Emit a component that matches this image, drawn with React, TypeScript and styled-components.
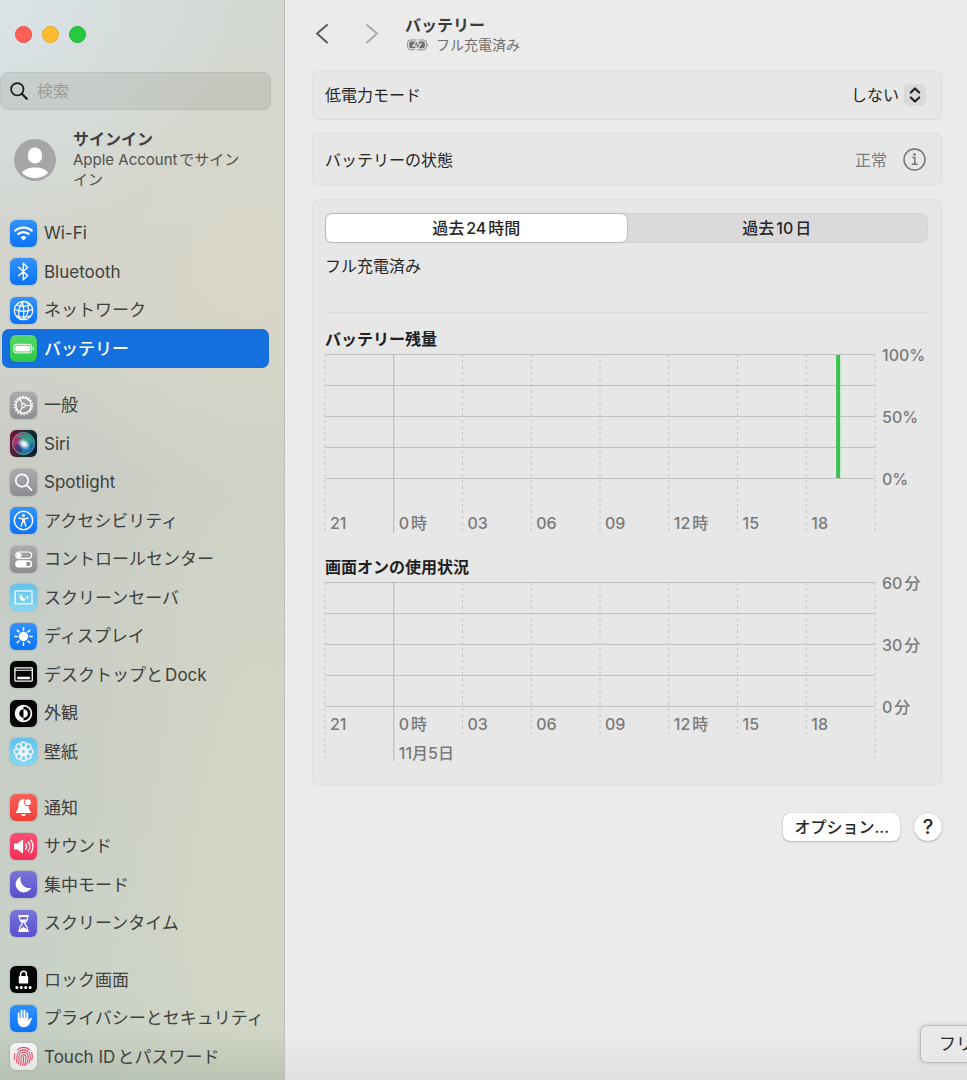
import React, { useState } from "react";
import styled, { createGlobalStyle } from "styled-components";

const GlobalStyle = createGlobalStyle`
  *, *::before, *::after { box-sizing: border-box; }
  html { background: #ebebeb; }
  body {
    margin: 0;
    font-family: Inter, "Noto Sans CJK JP", sans-serif;
    font-size: 16px;
    line-height: 20px;
    color: #262626;
    text-autospace: normal;
  }
  button, input, select { font: inherit; color: inherit; }
  svg { display: block; flex: none; }
`;

const Window = styled.div`
  display: flex;
  min-height: 100vh;
  position: relative;
  overflow: hidden;
`;

/* ---------- Sidebar ---------- */

const Sidebar = styled.aside`
  flex: none;
  width: 285px;
  display: flex;
  flex-direction: column;
  padding: 26px 0 4px;
  border-right: 1px solid #bfc0bc;
  color: #3e403d;
  background:
    linear-gradient(to top, rgba(150, 165, 150, 0.35), transparent 50px),
    radial-gradient(circle at 0 0, #dae3e7, transparent 240px),
    radial-gradient(circle at 250px 260px, #d8d6c8, transparent 240px),
    radial-gradient(ellipse at 260px 840px, #d4d7c5, transparent 220px),
    linear-gradient(#d4d8d3, #d2d3cb 30%, #c9ccc6 45%, #c8cdc6 70%, #c8d1c8 90%, #c6cfc2);
`;

const TrafficLights = styled.div`
  display: flex;
  gap: 10px;
  padding-left: 15px;
`;

const Light = styled.button<{ $color: string; $edge: string }>`
  width: 17px;
  height: 17px;
  padding: 0;
  border-radius: 50%;
  border: 1px solid ${(p) => p.$edge};
  background: ${(p) => p.$color};
`;

const SearchBox = styled.label`
  display: flex;
  align-items: center;
  gap: 9px;
  height: 38px;
  margin: 29px 13px 0 0;
  padding-left: 9px;
  border-radius: 8px;
  border: 1px solid rgba(0, 0, 0, 0.05);
  background: rgba(100, 105, 95, 0.14);
`;

const SearchInput = styled.input`
  flex: 1;
  min-width: 0;
  border: 0;
  padding: 0;
  background: none;
  outline: none;
  &::placeholder { color: #9a9d98; opacity: 1; }
`;

const Account = styled.a`
  display: flex;
  align-items: center;
  gap: 17px;
  margin: 19px 0 24px;
  padding-left: 14px;
  color: inherit;
  text-decoration: none;
`;

const AccountName = styled.div`
  font-weight: 600;
  line-height: 21px;
`;

const AccountNote = styled.div`
  font-size: 15px;
  line-height: 20px;
  color: #50524e;
`;

const Nav = styled.nav`
  flex: 1;
  display: flex;
  flex-direction: column;
  gap: 18px;
  padding: 0 15px 0 2px;
`;

const NavGroup = styled.ul<{ $count: number }>`
  flex: ${(p) => p.$count} 0 auto;
  max-height: ${(p) => p.$count * 39}px;
  display: flex;
  flex-direction: column;
  margin: 0;
  padding: 0;
  list-style: none;
`;

const NavItem = styled.li`
  flex: 1 0 38px;
  display: flex;
`;

const NavLink = styled.a<{ $active?: boolean }>`
  flex: 1;
  display: flex;
  align-items: center;
  gap: 7px;
  padding-left: 8px;
  border-radius: 7px;
  font-size: 17px;
  white-space: nowrap;
  text-decoration: none;
  color: ${(p) => (p.$active ? "#fff" : "inherit")};
  font-weight: ${(p) => (p.$active ? 500 : 400)};
  background: ${(p) => (p.$active ? "#1370de" : "none")};
`;

const Tile = styled.span<{ $bg: string }>`
  display: block;
  width: 27px;
  height: 27px;
  border-radius: 6px;
  overflow: hidden;
  background: ${(p) => p.$bg};
  box-shadow: 0 0 2px rgba(0, 0, 0, 0.25);
`;

/* ---------- Content ---------- */

const Content = styled.main`
  flex: 1;
  min-width: 0;
  display: flex;
  flex-direction: column;
  padding: 15px 25px 24px 27px;
  background: linear-gradient(to top, #e0e0e0, #ebebeb 50px);
`;

const Header = styled.header`
  display: flex;
  align-items: center;
  margin-bottom: 15px;
`;

const NavButton = styled.button<{ $dim?: boolean }>`
  width: 20px;
  height: 24px;
  margin-right: 30px;
  padding: 0;
  border: 0;
  background: none;
  color: ${(p) => (p.$dim ? "#ababab" : "#5a5a5a")};
`;

const Heading = styled.div`
  margin-left: -7px;
`;

const Title = styled.h1`
  margin: 0;
  font-size: 16px;
  font-weight: 600;
  line-height: 20px;
  color: #3a3a3a;
`;

const Status = styled.div`
  display: flex;
  align-items: center;
  gap: 7px;
  padding-left: 2px;
  font-size: 14px;
  line-height: 20px;
  color: #6f6f6f;
`;

const Cards = styled.div`
  display: flex;
  flex-direction: column;
  gap: 13px;
`;

const Card = styled.section`
  padding: 13px 13px 24px 12px;
  border: 1px solid #dedede;
  border-radius: 7px;
  background: #e7e7e7;
`;

const SettingRow = styled(Card)<{ $height: number }>`
  display: flex;
  align-items: center;
  justify-content: space-between;
  min-height: ${(p) => p.$height}px;
  padding: 0 15px 0 12px;
`;

const SelectBox = styled.span`
  position: relative;
  display: flex;
  align-items: center;
`;

const Select = styled.select`
  appearance: none;
  border: 0;
  outline: none;
  padding: 0 27px 0 0;
  background: none;
  text-align-last: right;
  line-height: 24px;
`;

const Stepper = styled.span`
  position: absolute;
  right: 0;
  width: 22px;
  height: 22px;
  border-radius: 5px;
  background: #dadada;
  pointer-events: none;
`;

const StateValue = styled.span`
  display: flex;
  align-items: center;
  gap: 16px;
  color: #7b7b7b;
`;

const IconButton = styled.button`
  padding: 0;
  border: 0;
  background: none;
  color: #757575;
`;

const Segments = styled.div`
  display: flex;
  height: 30px;
  border-radius: 7px;
  border: 1px solid #d2d2d2;
  background: #dadada;
`;

const Segment = styled.button<{ $on: boolean }>`
  flex: 1;
  padding: 0;
  border: 0;
  border-radius: 6px;
  font-weight: 500;
  background: ${(p) => (p.$on ? "#fff" : "none")};
  box-shadow: ${(p) => (p.$on ? "0 0 2px rgba(0, 0, 0, 0.4)" : "none")};
`;

const Charge = styled.p`
  margin: 11px 0 0;
  padding-bottom: 34px;
  line-height: 24px;
  border-bottom: 1px solid #dadada;
`;

const ChartTitle = styled.h2<{ $gap: number }>`
  margin: ${(p) => p.$gap}px 0 3px;
  font-size: 16px;
  font-weight: 700;
  line-height: 24px;
  color: #202020;
`;

const ChartArea = styled.div`
  display: grid;
  grid-template-columns: minmax(0, 1fr) 53px;
`;

const Plot = styled.svg`
  width: 100%;
  height: 179px;
  overflow: visible;
  text { font-size: 16px; font-weight: 500; fill: #7a7a7a; }
`;

const DateText = styled.text`
  text-autospace: no-autospace;
`;

const Scale = styled.div`
  display: flex;
  flex-direction: column;
  justify-content: space-between;
  height: 148px;
  margin-top: -11px;
  padding-left: 7px;
  font-weight: 500;
  line-height: 24px;
  color: #7a7a7a;
  white-space: nowrap;
`;

const Footer = styled.footer`
  display: flex;
  justify-content: flex-end;
  align-items: center;
  gap: 14px;
  margin-top: 27px;
`;

const PushButton = styled.button`
  height: 28px;
  padding: 0 11px;
  border: 0;
  border-radius: 7px;
  font-weight: 500;
  background: #fff;
  box-shadow: 0 0 1px rgba(0, 0, 0, 0.3), 0 1px 2px rgba(0, 0, 0, 0.2);
`;

const HelpButton = styled(PushButton)`
  width: 28px;
  padding: 0;
  border-radius: 50%;
  font-size: 20px;
  line-height: 28px;
`;

const DockLabel = styled.div`
  position: absolute;
  right: -7px;
  bottom: 17px;
  padding: 0 0 0 18px;
  width: 54px;
  height: 38px;
  overflow: hidden;
  border: 1px solid #bdbdbd;
  border-radius: 7px 0 0 7px;
  line-height: 36px;
  font-size: 17px;
  white-space: nowrap;
  background: #e8e8e8;
  box-shadow: 0 0 4px rgba(0, 0, 0, 0.18);
`;

/* ---------- Icons ---------- */

const BLUE = "linear-gradient(#3391fb, #0a74f5)";
const GRAY = "linear-gradient(#ababaf, #8c8c91)";
const SKY = "linear-gradient(#62c4ec, #8ad6f2)";
const BLACK = "#060606";
const PURPLE = "linear-gradient(#7a74dc, #5850cc)";

const petals = Array.from({ length: 8 }, (_, i) => i * 45);

const glyphs: Record<string, React.ReactNode> = {
  wifi: (
    <g fill="none" stroke="#fff" strokeWidth="2.3">
      <path d="M4.6 11.2a12.7 12.7 0 0 1 17.8 0" />
      <path d="M7.7 14.4a8.3 8.3 0 0 1 11.6 0" />
      <path d="M13.5 20.4l-3-3a4.3 4.3 0 0 1 6 0z" fill="#fff" stroke="none" />
    </g>
  ),
  bluetooth: (
    <path d="M8.6 9.2l9 8.4-4.3 4.2V5.2l4.3 4.2-9 8.4" fill="none" stroke="#fff" strokeWidth="1.4" strokeLinejoin="round" strokeLinecap="round" />
  ),
  network: (
    <g fill="none" stroke="#fff" strokeWidth="1.2">
      <circle cx="13.5" cy="13.5" r="9.2" />
      <ellipse cx="13.5" cy="13.5" rx="4.6" ry="9.2" transform="rotate(12 13.5 13.5)" />
      <path d="M12 4.500c2 6 2.500 12 1 18M4.500 12.500c6 2.500 12 2.500 18 0M6.500 7.800c4.500 2 9.500 2 14 0M6 18.800c5 1.600 10 1.600 15 0" />
    </g>
  ),
  battery: (
    <g>
      <rect x="3.800" y="9.300" width="18" height="8.600" rx="2.400" fill="none" stroke="#fff" strokeWidth="1" />
      <rect x="5.200" y="10.700" width="15.200" height="5.800" rx="1.300" fill="#fff" />
      <path d="M23.200 11.800v3.600c1.400-.6 1.400-3 0-3.600z" fill="#fff" />
    </g>
  ),
  general: (
    <g fill="none" stroke="#fff">
      <circle cx="13.500" cy="13.500" r="7.700" strokeWidth="1.500" />
      <circle cx="13.500" cy="13.500" r="9.100" strokeWidth="1.500" strokeDasharray="1.600 1.580" />
      <circle cx="13.500" cy="13.500" r="1.900" strokeWidth="1.100" />
      <path d="M15.500 13.500h5.600M12.500 11.800L9.600 6.900M12.500 15.200l-2.900 4.900" strokeWidth="1.200" />
    </g>
  ),
  siri: (
    <g>
      <defs>
        <radialGradient id="siriCore" cx="0.5" cy="0.5" r="0.5">
          <stop offset="0" stopColor="#fff" />
          <stop offset="0.4" stopColor="#d9eef7" stopOpacity="0.9" />
          <stop offset="1" stopColor="#7cc" stopOpacity="0" />
        </radialGradient>
        <linearGradient id="siriRing" x1="0" y1="0.3" x2="1" y2="0.7">
          <stop offset="0" stopColor="#d02a66" />
          <stop offset="0.35" stopColor="#8a3c74" />
          <stop offset="0.6" stopColor="#1d8f86" />
          <stop offset="1" stopColor="#1763c4" />
        </linearGradient>
      </defs>
      <circle cx="13.500" cy="13.500" r="11" fill="url(#siriRing)" stroke="#7cc0ba" strokeOpacity="0.700" strokeWidth="1" />
      <path d="M6 7c4-4 12-4 16 2 1 2 1 4 0 5-3-4-6-5-9-4-2-2-4-3-7-3z" fill="#2fa37c" opacity="0.850" />
      <path d="M4 17c4-4 8-4 10-2 3 3 6 2 9-1-1 10-15 12-19 3z" fill="#23357c" opacity="0.650" />
      <path d="M13 15c3 3 6 3 9 2-2 4-6 6-10 5z" fill="#2b8fe0" opacity="0.600" />
      <ellipse cx="14" cy="14" rx="7.500" ry="5.500" fill="url(#siriCore)" transform="rotate(30 14 14)" />
    </g>
  ),
  spotlight: (
    <g fill="none" stroke="#fff" strokeWidth="1.700" strokeLinecap="round">
      <circle cx="12" cy="11.500" r="6.200" />
      <path d="M16.600 16.200l5 5" />
    </g>
  ),
  accessibility: (
    <g>
      <circle cx="13.500" cy="13.500" r="9.200" fill="none" stroke="#fff" strokeWidth="1.500" />
      <circle cx="13.500" cy="8.400" r="1.500" fill="#fff" />
      <path d="M9 11l3.400.8h2.200L18 11" fill="none" stroke="#fff" strokeWidth="1.300" strokeLinecap="round" strokeLinejoin="round" />
      <path d="M12 11.500h3v4h-3z" fill="#fff" />
      <path d="M12.600 14.800l-1.500 4.400M14.400 14.800l1.500 4.400" fill="none" stroke="#fff" strokeWidth="1.300" strokeLinecap="round" />
    </g>
  ),
  control: (
    <g>
      <rect x="5.800" y="6" width="15.800" height="6.400" rx="3.200" fill="none" stroke="#fff" strokeWidth="1.200" />
      <circle cx="9" cy="9.200" r="2.500" fill="#fff" />
      <rect x="5.200" y="14.200" width="17" height="7.400" rx="3.700" fill="#fff" />
      <circle cx="18.400" cy="17.900" r="2.200" fill="#8d8d92" />
    </g>
  ),
  screensaver: (
    <g>
      <rect x="5.200" y="7" width="16.800" height="12.800" fill="none" stroke="#fff" strokeWidth="1.200" />
      <path d="M12.200 10a3.500 3.500 0 1 0 3.800 5.200 4 4 0 0 1-3.800-5.200z" fill="#fff" />
      <path d="M17.500 11.200v4M15.500 13.200h4" stroke="#fff" strokeWidth="0.900" />
      <circle cx="8.500" cy="10" r="0.600" fill="#fff" />
    </g>
  ),
  display: (
    <g>
      <circle cx="13.500" cy="13.500" r="4.700" fill="#fff" />
      {petals.map((a) => (
        <path key={a} d="M13.500 4.800v2.400" stroke="#fff" strokeWidth="1.500" strokeLinecap="round" transform={`rotate(${a} 13.500 13.500)`} />
      ))}
    </g>
  ),
  dock: (
    <g>
      <rect x="4.900" y="6.900" width="17.400" height="13.200" rx="0.800" fill="none" stroke="#fff" strokeWidth="1.300" />
      <path d="M5 9.300h17" stroke="#fff" strokeWidth="1.100" />
      <rect x="7.300" y="15.700" width="12.600" height="2.600" rx="0.600" fill="#fff" />
    </g>
  ),
  appearance: (
    <g>
      <circle cx="13.500" cy="13.500" r="7.900" fill="none" stroke="#fff" strokeWidth="1.700" />
      <path d="M13.500 6a7.500 7.500 0 0 0 0 15v-3.200a4.300 4.300 0 0 1 0-8.600z" fill="#fff" />
      <path d="M13.500 9.200a4.300 4.300 0 0 1 0 8.600z" fill="#fff" />
    </g>
  ),
  wallpaper: (
    <g fill="none" stroke="#fff" strokeWidth="1.100">
      {petals.map((a) => (
        <circle key={a} cx="13.500" cy="6.800" r="2.700" transform={`rotate(${a} 13.500 13.500)`} />
      ))}
      <circle cx="13.500" cy="13.500" r="2.800" />
      {petals.map((a) => (
        <path key={a} d="M13.500 9.500v2.600" transform={`rotate(${a + 22} 13.500 13.500)`} />
      ))}
    </g>
  ),
  notification: (
    <g>
      <path d="M13.500 5.200c-3.400 0-5 2.600-5 5.600 0 4.200-1.300 5.400-2.300 6.600-.5.700-.2 1.600.8 1.600h13c1 0 1.300-.9.800-1.600-1-1.200-2.300-2.400-2.300-6.600 0-3-1.600-5.600-5-5.600z" fill="#fff" />
      <path d="M11 20.200h5c-.3 2.400-4.700 2.400-5 0z" fill="#fff" />
      <circle cx="18" cy="8.200" r="3.900" fill="#f4534c" />
      <circle cx="18" cy="8.200" r="2.900" fill="#fff" />
    </g>
  ),
  sound: (
    <g>
      <path d="M4 11.400c0-.5.300-.8.800-.8h2.700l4.300-3.700c.6-.5 1.300-.2 1.300.5v12.200c0 .7-.7 1-1.300.5l-4.300-3.700H4.800c-.5 0-.8-.3-.8-.8z" fill="#fff" />
      <path d="M15.600 10.800c1.200 1.600 1.200 3.800 0 5.400M18.200 9c2 2.700 2 6.300 0 9M20.800 7.200c2.800 3.800 2.800 8.800 0 12.600" fill="none" stroke="#fff" strokeWidth="1.300" strokeLinecap="round" />
    </g>
  ),
  focus: <path d="M10.800 5.600a8.200 8.200 0 1 0 10.400 11.300 9 9 0 0 1-10.400-11.300z" fill="#fff" />,
  screentime: (
    <g>
      <path d="M8.300 5h10.400v2h-10.400zM8.300 20h10.400v2h-10.400z" fill="#fff" />
      <path d="M9.600 7v1.500c0 2.700 2.700 3.500 2.700 5s-2.700 2.300-2.700 5V20h7.800v-1.500c0-2.700-2.700-3.500-2.700-5s2.700-2.300 2.700-5V7" fill="none" stroke="#fff" strokeWidth="1.200" />
      <path d="M10.500 9.400h6c-.6 1.400-2 2-2.200 3.400h-1.600c-.2-1.400-1.600-2-2.200-3.400zM10.200 20c.3-2 3.300-2.600 3.300-3.600 0 1 3 1.600 3.300 3.600z" fill="#fff" />
    </g>
  ),
  lock: (
    <g fill="#fff">
      <rect x="8.800" y="10" width="9.400" height="7.600" rx="1.200" />
      <path d="M10.600 10.400V8.200a2.900 2.900 0 0 1 5.800 0v2.200" fill="none" stroke="#fff" strokeWidth="1.500" />
      {[6.900, 11.300, 15.700, 20.100].map((x) => (
        <circle key={x} cx={x} cy="21.500" r="1.500" />
      ))}
    </g>
  ),
  privacy: (
    <g stroke="#fff" strokeLinecap="round" fill="none" strokeWidth="1.900">
      <path d="M8.700 14.500V8.200M11.600 13V5.600M14.500 13V5.800M17.300 14V8.200" />
      <path d="M7.800 13h10.500v2.500l2.100-2.200c.8-.8 1.800-.1 1.300.9-1.300 2.500-2.600 8-7.700 8-4.300 0-6.200-2.800-6.200-6.700z" fill="#fff" stroke="none" />
    </g>
  ),
  touchid: (
    <g fill="none" stroke="#dd4f68" strokeWidth="1.100" strokeLinecap="round">
      <path d="M7.200 6.900a9 9 0 0 1 12.800.3M5 10.500a9.300 9.300 0 0 0-.4 6.200M21.600 9.500c1 2.300 1.100 5 .2 7.500M6.300 19.400c1-2 .6-4 .6-6a6.700 6.700 0 0 1 13.200-1.300c.4 2.600.1 5.400-1 8" />
      <path d="M8.200 21c1.300-2.500.8-5 .8-7.500a4.600 4.600 0 0 1 9.100-.6c.3 3-.2 6-1.500 8.800M10.300 22c1.300-2.800.9-5.600.9-8.300a2.400 2.400 0 0 1 4.700-.3c.3 3.200-.3 6.200-1.600 9M12.400 22.600c1.300-2.900 1.300-5.900 1.200-9" />
      <path d="M9 8.600a6.800 6.800 0 0 1 8.400-.4" />
    </g>
  ),
};

interface Entry {
  icon: string;
  label: string;
  bg: string;
}

const groups: Entry[][] = [
  [
    { icon: "wifi", label: "Wi-Fi", bg: BLUE },
    { icon: "bluetooth", label: "Bluetooth", bg: BLUE },
    { icon: "network", label: "ネットワーク", bg: BLUE },
    { icon: "battery", label: "バッテリー", bg: "linear-gradient(#57d86b, #2cc748)" },
  ],
  [
    { icon: "general", label: "一般", bg: GRAY },
    { icon: "siri", label: "Siri", bg: "linear-gradient(100deg, #7c1440, #12302c 60%, #0a1c30)" },
    { icon: "spotlight", label: "Spotlight", bg: GRAY },
    { icon: "accessibility", label: "アクセシビリティ", bg: BLUE },
    { icon: "control", label: "コントロールセンター", bg: GRAY },
    { icon: "screensaver", label: "スクリーンセーバ", bg: SKY },
    { icon: "display", label: "ディスプレイ", bg: BLUE },
    { icon: "dock", label: "デスクトップとDock", bg: BLACK },
    { icon: "appearance", label: "外観", bg: BLACK },
    { icon: "wallpaper", label: "壁紙", bg: SKY },
  ],
  [
    { icon: "notification", label: "通知", bg: "linear-gradient(#fa625b, #ee4039)" },
    { icon: "sound", label: "サウンド", bg: "linear-gradient(#fb4f73, #f52f58)" },
    { icon: "focus", label: "集中モード", bg: PURPLE },
    { icon: "screentime", label: "スクリーンタイム", bg: PURPLE },
  ],
  [
    { icon: "lock", label: "ロック画面", bg: BLACK },
    { icon: "privacy", label: "プライバシーとセキュリティ", bg: BLUE },
    { icon: "touchid", label: "Touch IDとパスワード", bg: "linear-gradient(#f6f6f6, #e4e4e4)" },
  ],
];

/* ---------- Charts ---------- */

const hours = ["21", "0時", "03", "06", "09", "12時", "15", "18"];

interface ChartProps {
  name: string;
  scale: string[];
  labelY: number;
  tickEnd: number;
  date?: string;
  bar?: { at: number; value: number };
}

function Chart({ name, scale, labelY, tickEnd, date, bar }: ChartProps) {
  const column = 100 / hours.length;
  return (
    <ChartArea>
      <Plot role="img" aria-label={name}>
        {[0, 31, 62, 93, 124].map((y) => (
          <line key={y} x1="0" x2="100%" y1={y + 0.5} y2={y + 0.5} stroke="#c2c2c2" />
        ))}
        {Array.from({ length: hours.length + 1 }, (_, i) => {
          const midnight = i === 1;
          const edge = i === 0 || i === hours.length;
          return (
            <line
              key={i}
              x1={`${i * column}%`}
              x2={`${i * column}%`}
              y1="0"
              y2={edge || midnight ? 179 : tickEnd}
              stroke={midnight ? "#b4b4b4" : "#c4c4c4"}
              strokeDasharray={midnight ? undefined : "3 3"}
            />
          );
        })}
        {hours.map((h, i) => (
          <text key={h} x={`${i * column}%`} dx="5" y={labelY}>
            {h}
          </text>
        ))}
        {date && (
          <DateText x={`${column}%`} dx="5" y="177">
            {date}
          </DateText>
        )}
        {bar && (
          <line
            x1={`${bar.at}%`}
            x2={`${bar.at}%`}
            y1={124 - (bar.value * 124) / 100 + 1}
            y2="124"
            stroke="#34c648"
            strokeWidth="4"
          />
        )}
      </Plot>
      <Scale>
        {scale.map((s) => (
          <span key={s}>{s}</span>
        ))}
      </Scale>
    </ChartArea>
  );
}

/* ---------- Page ---------- */

export default function App() {
  const [range, setRange] = useState(0);

  return (
    <>
      <GlobalStyle />
      <Window>
        <Sidebar>
          <TrafficLights>
            <Light $color="#fe5f57" $edge="#e8504a" aria-label="閉じる" />
            <Light $color="#febc2e" $edge="#e5a52a" aria-label="しまう" />
            <Light $color="#28c840" $edge="#20b236" aria-label="拡大" />
          </TrafficLights>

          <SearchBox>
            <svg width="18" height="18" viewBox="0 0 18 18" fill="none" stroke="#1c1c1c" strokeLinecap="round">
              <circle cx="7.300" cy="7.300" r="6.200" strokeWidth="1.700" />
              <path d="M12 12l4.800 4.800" strokeWidth="2.200" />
            </svg>
            <SearchInput type="text" placeholder="検索" aria-label="検索" />
          </SearchBox>

          <Account href="#account">
            <svg width="42" height="42" viewBox="0 0 42 42">
              <circle cx="21" cy="21" r="21" fill="#a6a6a6" />
              <ellipse cx="21" cy="16.500" rx="7.200" ry="8" fill="#fff" />
              <path d="M8 34c2.500-7.500 23.500-7.500 26 0a18.800 18.800 0 0 1-26 0z" fill="#fff" />
            </svg>
            <div>
              <AccountName>サインイン</AccountName>
              <AccountNote>
                Apple Accountでサイン
                <br />
                イン
              </AccountNote>
            </div>
          </Account>

          <Nav>
            {groups.map((entries, g) => (
              <NavGroup key={g} $count={entries.length}>
                {entries.map((e) => (
                  <NavItem key={e.icon}>
                    <NavLink
                      href={`#${e.icon}`}
                      $active={e.icon === "battery"}
                      aria-current={e.icon === "battery" ? "page" : undefined}
                    >
                      <Tile $bg={e.bg}>
                        <svg width="27" height="27" viewBox="0 0 27 27" aria-hidden="true">
                          {glyphs[e.icon]}
                        </svg>
                      </Tile>
                      {e.label}
                    </NavLink>
                  </NavItem>
                ))}
              </NavGroup>
            ))}
          </Nav>
        </Sidebar>

        <Content>
          <Header>
            <NavButton aria-label="戻る">
              <svg width="20" height="24" viewBox="0 0 20 24" fill="none" stroke="currentColor" strokeWidth="2" strokeLinecap="round" strokeLinejoin="round">
                <path d="M15 2L5 10.500L15 19.500" />
              </svg>
            </NavButton>
            <NavButton $dim aria-label="進む">
              <svg width="20" height="24" viewBox="0 0 20 24" fill="none" stroke="currentColor" strokeWidth="2" strokeLinecap="round" strokeLinejoin="round">
                <path d="M5 2L15 10.500L5 19.500" />
              </svg>
            </NavButton>
            <Heading>
              <Title>バッテリー</Title>
              <Status>
                <svg width="22" height="12" viewBox="0 0 22 12" aria-hidden="true">
                  <rect x="0.600" y="1" width="18.800" height="9.800" rx="3" fill="none" stroke="#8a8a8a" />
                  <rect x="2.200" y="2.600" width="15.600" height="6.600" rx="1.600" fill="#707070" />
                  <path d="M11.400 0L6 6.800h3.400L8.200 12L14 5h-3.500z" fill="#6a6a6a" stroke="#ebebeb" strokeWidth="1.200" />
                  <path d="M20.500 4.400v3c1.200-.5 1.200-2.500 0-3z" fill="#8a8a8a" />
                </svg>
                フル充電済み
              </Status>
            </Heading>
          </Header>

          <Cards>
            <SettingRow $height={50}>
              <label htmlFor="low-power">低電力モード</label>
              <SelectBox>
                <Select id="low-power" defaultValue="never">
                  <option value="never">しない</option>
                </Select>
                <Stepper>
                  <svg width="22" height="22" viewBox="0 0 22 22" fill="none" stroke="#222" strokeWidth="2.200" strokeLinecap="round" strokeLinejoin="round">
                    <path d="M6.800 8.500L11 4.500l4.200 4M6.800 13.500l4.200 4 4.200-4" />
                  </svg>
                </Stepper>
              </SelectBox>
            </SettingRow>

            <SettingRow $height={53}>
              <span>バッテリーの状態</span>
              <StateValue>
                正常
                <IconButton aria-label="詳細情報">
                  <svg width="23" height="23" viewBox="0 0 23 23" fill="none" stroke="currentColor" strokeWidth="1.500">
                    <circle cx="11.500" cy="11.500" r="10.500" />
                    <path d="M9.300 9.500h2.500v6.500M8.800 16.200h6" />
                    <circle cx="11.500" cy="6.500" r="1.300" fill="currentColor" stroke="none" />
                  </svg>
                </IconButton>
              </StateValue>
            </SettingRow>

            <Card>
              <Segments>
                <Segment $on={range === 0} aria-pressed={range === 0} onClick={() => setRange(0)}>
                  過去24時間
                </Segment>
                <Segment $on={range === 1} aria-pressed={range === 1} onClick={() => setRange(1)}>
                  過去10日
                </Segment>
              </Segments>
              <Charge>フル充電済み</Charge>

              <ChartTitle $gap={14}>バッテリー残量</ChartTitle>
              <Chart
                name="バッテリー残量"
                scale={["100%", "50%", "0%"]}
                labelY={175}
                tickEnd={179}
                bar={{ at: 93.3, value: 100 }}
              />

              <ChartTitle $gap={22}>画面オンの使用状況</ChartTitle>
              <Chart
                name="画面オンの使用状況"
                scale={["60分", "30分", "0分"]}
                labelY={148}
                tickEnd={152}
                date="11月5日"
              />
            </Card>
          </Cards>

          <Footer>
            <PushButton>オプション...</PushButton>
            <HelpButton aria-label="ヘルプ">?</HelpButton>
          </Footer>
        </Content>

        <DockLabel>フリ</DockLabel>
      </Window>
    </>
  );
}
